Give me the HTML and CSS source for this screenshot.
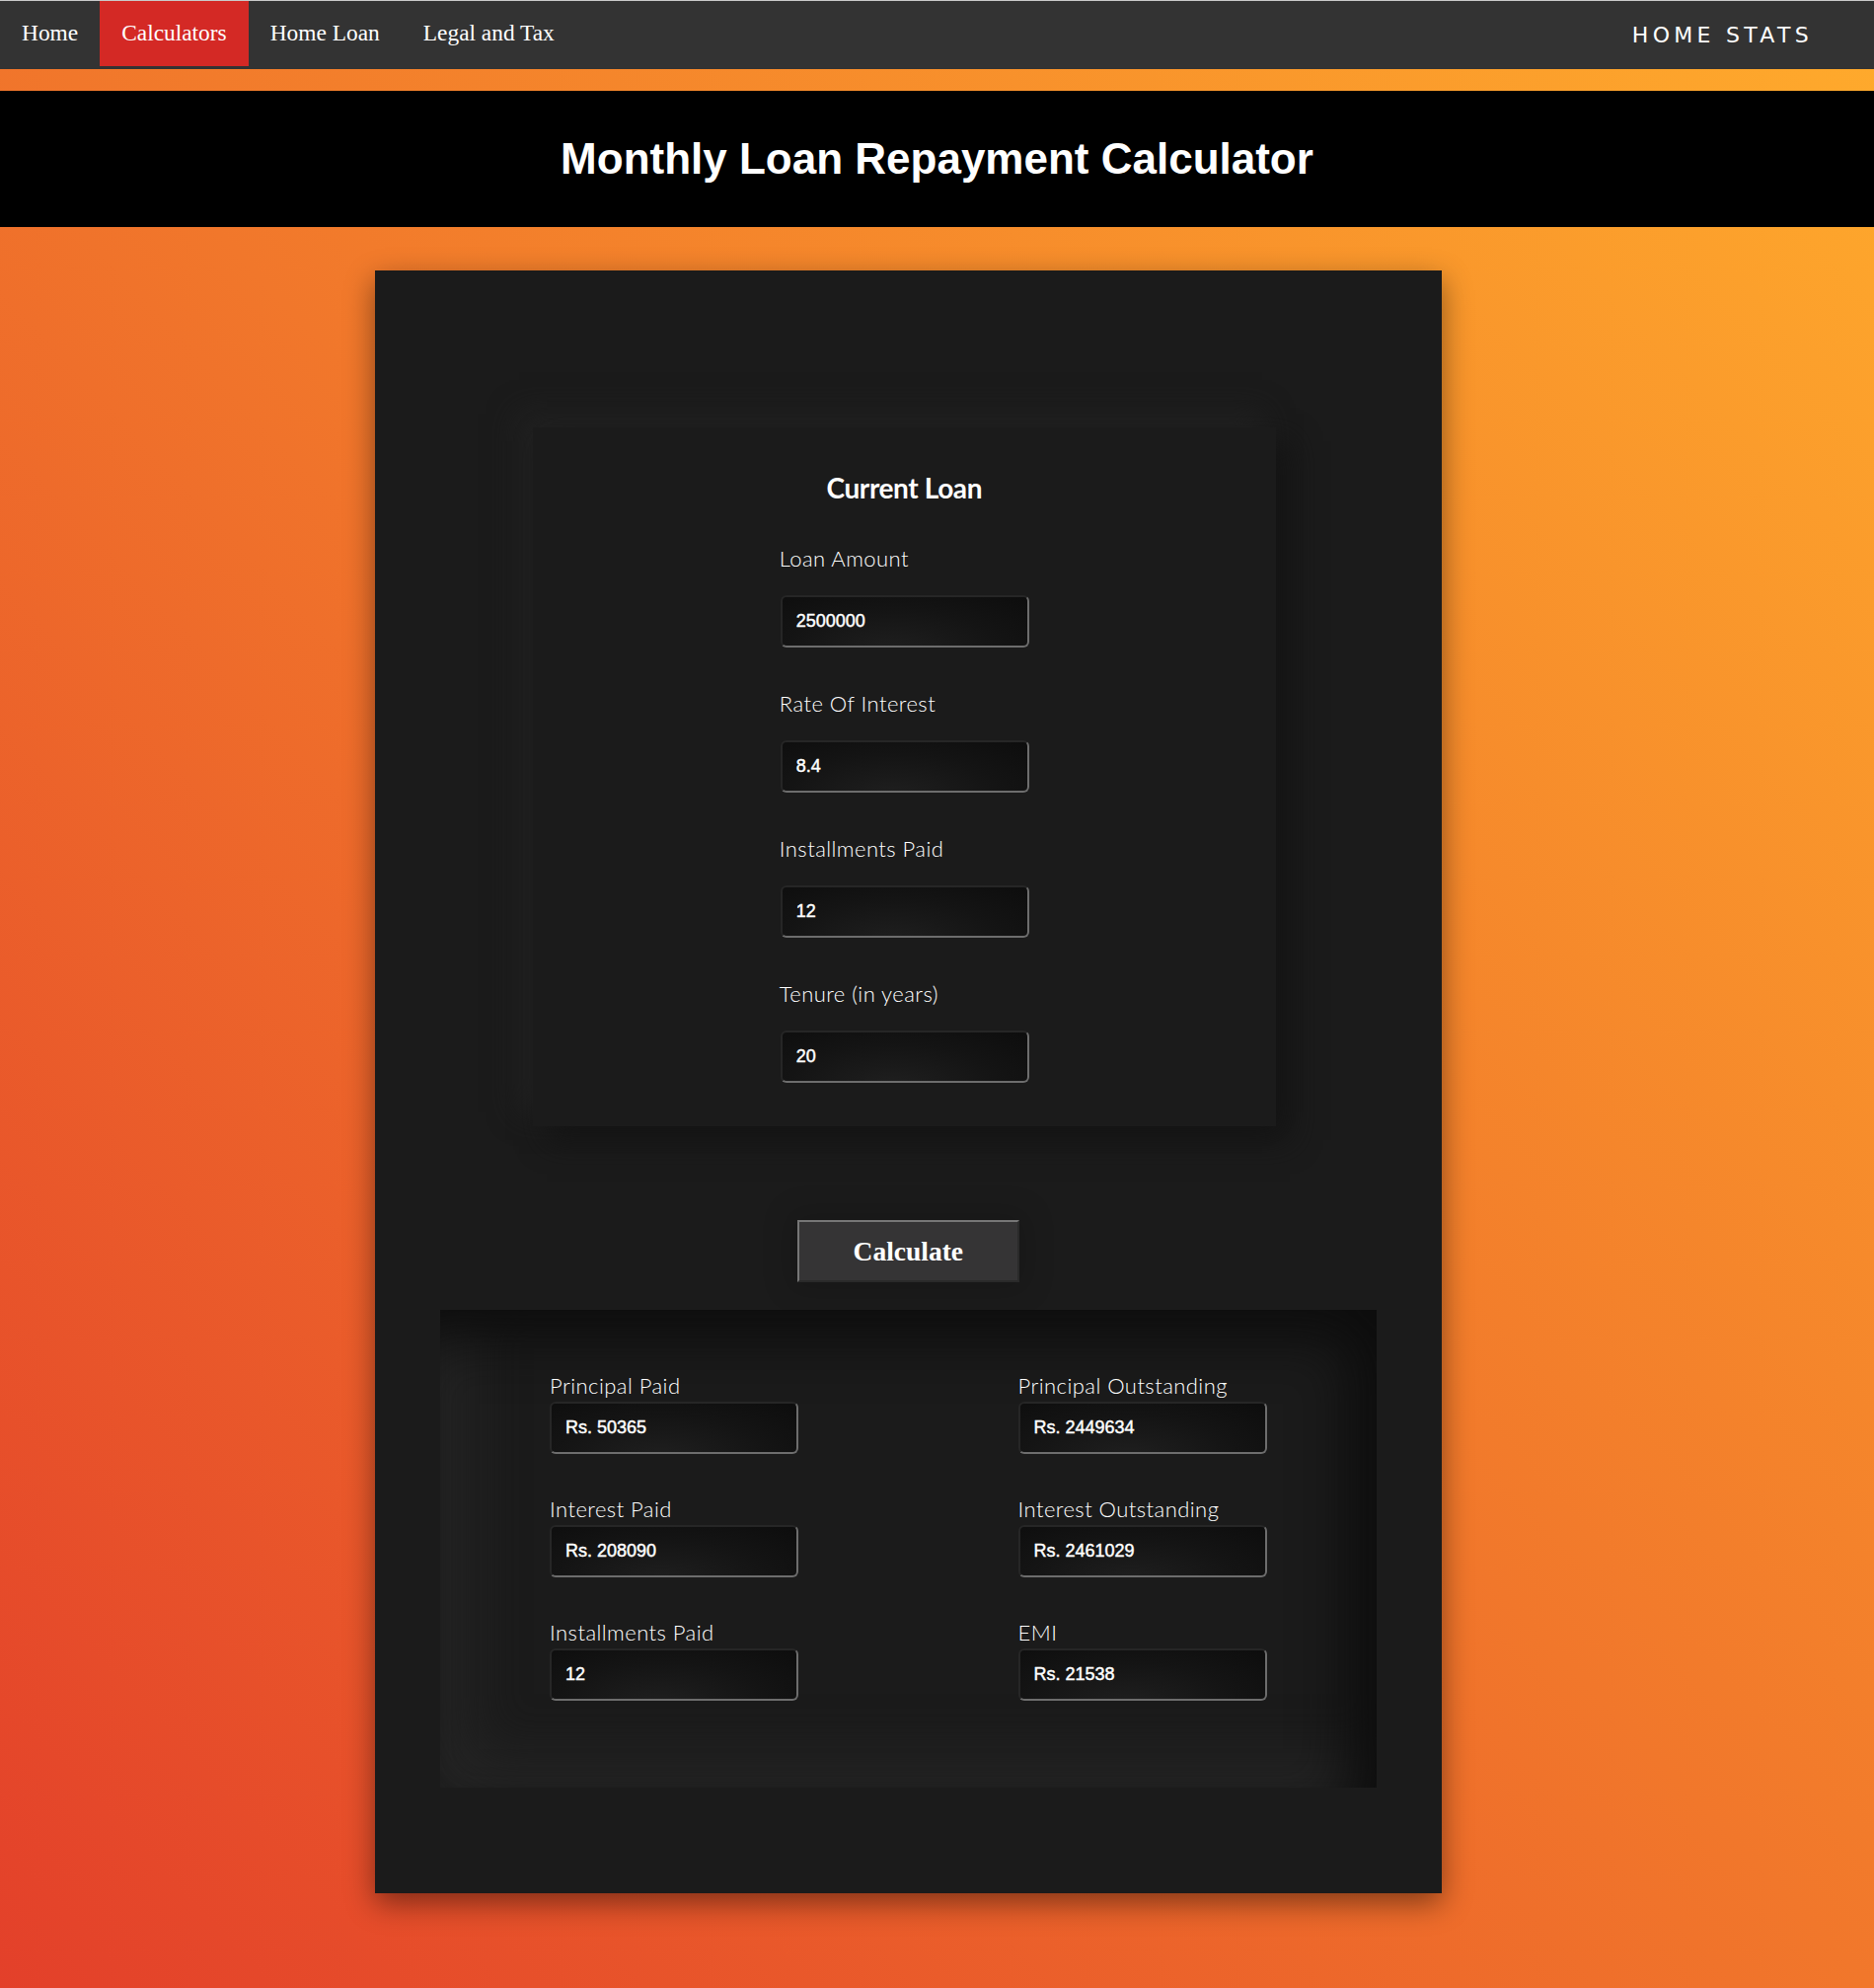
FILE: index.html
```html
<!DOCTYPE html>
<html lang="en">
<head>
<meta charset="utf-8">
<title>Monthly Loan Repayment Calculator</title>
<link rel="stylesheet" href="styles.css">
</head>
<body>
<nav class="topnav">
  <ul class="menu">
    <li><a href="#">Home</a></li>
    <li><a href="#" class="active">Calculators</a></li>
    <li><a href="#">Home Loan</a></li>
    <li><a href="#">Legal and Tax</a></li>
  </ul>
  <div class="brand">HOME STATS</div>
</nav>
<div class="strip"></div>
<header class="banner">
  <h1>Monthly Loan Repayment Calculator</h1>
</header>
<main class="card">
  <section class="current">
    <h2>Current Loan</h2>
    <div class="form">
      <div class="field">
        <label>Loan Amount</label>
        <div class="box">2500000</div>
      </div>
      <div class="field">
        <label>Rate Of Interest</label>
        <div class="box">8.4</div>
      </div>
      <div class="field">
        <label>Installments Paid</label>
        <div class="box">12</div>
      </div>
      <div class="field">
        <label>Tenure (in years)</label>
        <div class="box">20</div>
      </div>
    </div>
  </section>
  <button class="calc" type="button">Calculate</button>
  <section class="results">
    <div class="res"><label>Principal Paid</label><div class="box">Rs. 50365</div></div>
    <div class="res"><label>Principal Outstanding</label><div class="box">Rs. 2449634</div></div>
    <div class="res"><label>Interest Paid</label><div class="box">Rs. 208090</div></div>
    <div class="res"><label>Interest Outstanding</label><div class="box">Rs. 2461029</div></div>
    <div class="res"><label>Installments Paid</label><div class="box">12</div></div>
    <div class="res"><label>EMI</label><div class="box">Rs. 21538</div></div>
  </section>
</main>
</body>
</html>
```
FILE: styles.css
```css
html, body {
  margin: 0;
  padding: 0;
}
body {
  min-height: 2014px;
  background: linear-gradient(to top right, #e3402a 0%, #f1772b 50%, #ffab2c 100%);
  background-attachment: fixed;
  font-family: "Liberation Sans", Arial, sans-serif;
  overflow: hidden;
}

/* nav */
.topnav {
  display: flex;
  align-items: flex-start;
  background: #333333;
  border-top: 1px solid #c9c9c9;
  height: 69px;
}
.menu {
  display: flex;
  list-style: none;
  margin: 0;
  padding: 0;
}
.menu a {
  display: block;
  padding: 0 22px;
  height: 66px;
  line-height: 64px;
  font-family: "Liberation Serif", "Times New Roman", serif;
  font-size: 23.4px;
  color: #ffffff;
  text-decoration: none;
}
.menu a.active {
  background: #d42925;
}
.brand {
  margin-left: auto;
  margin-right: 62px;
  margin-top: 24px;
  font-family: "DejaVu Sans", sans-serif;
  font-size: 22px;
  letter-spacing: 4.3px;
  color: #ffffff;
  line-height: 22px;
}

.strip {
  height: 22px;
}

.banner {
  background: #000000;
  height: 138px;
  display: flex;
  align-items: center;
  justify-content: center;
}
.banner h1 {
  margin: 0;
  font-family: "Liberation Sans", Arial, sans-serif;
  font-weight: bold;
  font-size: 44px;
  color: #ffffff;
}

/* card */
.card {
  display: block;
  margin: 44px 0 90px 20%;
  width: 1081px;
  box-sizing: border-box;
  background: #1b1b1b;
  padding: 159px 0 107px;
  box-shadow: 0 10px 28px rgba(0, 0, 0, 0.45);
}

.current {
  width: 753px;
  margin-left: 160px;
  box-sizing: border-box;
  padding: 44px 0;
  background: #1b1b1b;
  box-shadow: 14px 14px 28px #141414, -14px -14px 28px #222222;
}
.current h2 {
  margin: 0 0 42px;
  text-align: center;
  font-family: Lato, "Noto Sans", sans-serif;
  font-weight: bold;
  font-size: 28px;
  line-height: 34px;
  letter-spacing: -0.4px;
  color: #ffffff;
}
.form {
  width: 253px;
  margin: 0 auto;
  display: flex;
  flex-direction: column;
  gap: 44px;
}
.field label,
.res label {
  display: block;
  font-family: Lato, "Noto Sans", sans-serif;
  font-weight: 300;
  font-size: 22px;
  line-height: 26px;
  letter-spacing: 0.45px;
  color: #ffffff;
}
.field label {
  margin-bottom: 24px;
}
.res label {
  margin-bottom: 3px;
}

.box {
  box-sizing: border-box;
  width: 252px;
  height: 53px;
  padding-left: 14px;
  display: flex;
  align-items: center;
  border: 2px solid;
  border-color: #262626 #6d6d6d #6d6d6d #262626;
  border-radius: 6px;
  background: radial-gradient(ellipse at 45% 110%, #1f1f1f 0%, #141414 55%, #0d0d0d 100%);
  font-family: "Liberation Sans", Arial, sans-serif;
  font-weight: normal;
  font-size: 18px;
  -webkit-text-stroke: 0.45px #ffffff;
  color: #ffffff;
}
.form .box {
  margin-left: 1px;
}

.calc {
  display: block;
  width: 225px;
  height: 63px;
  margin: 95px auto 28px;
  background: #353435;
  border: 2px solid;
  border-color: #767676 #2a2a2a #2a2a2a #767676;
  font-family: "Liberation Serif", "Times New Roman", serif;
  font-weight: bold;
  font-size: 27.5px;
  color: #ffffff;
  box-shadow: 0 0 30px 8px rgba(0, 0, 0, 0.14);
}

.results {
  margin: 0 66px;
  height: 484px;
  box-sizing: border-box;
  padding-top: 64px;
  display: grid;
  grid-template-columns: 1fr 1fr;
  row-gap: 43px;
  align-content: start;
  justify-items: center;
  background: #1b1b1b;
  box-shadow: inset -28px 28px 55px #0d0d0d, inset 28px -28px 55px #262626;
}
```
